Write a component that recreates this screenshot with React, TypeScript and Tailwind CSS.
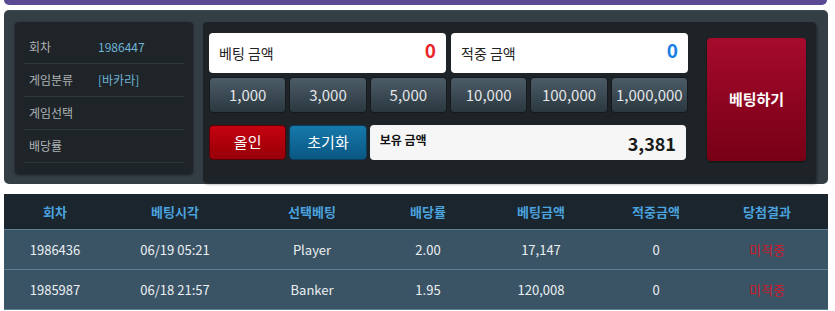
import React from "react";

const font = { fontFamily: '"Noto Sans CJK KR", "Noto Sans", sans-serif' };

const chips = ["1,000", "3,000", "5,000", "10,000", "100,000", "1,000,000"];

const infoRows = [
  { label: "회차", value: "1986447" },
  { label: "게임분류", value: "[바카라]" },
  { label: "게임선택", value: "" },
  { label: "배당률", value: "" },
];

const rows = [
  ["1986436", "06/19 05:21", "Player", "2.00", "17,147", "0", "미적중"],
  ["1985987", "06/18 21:57", "Banker", "1.95", "120,008", "0", "미적중"],
];

const headers = ["회차", "베팅시각", "선택베팅", "배당률", "베팅금액", "적중금액", "당첨결과"];

export default function App() {
  return (
    <div className="w-[835px] h-[311px] bg-white overflow-hidden" style={font}>
      <div className="mx-[4px] w-[823px] h-[5px] bg-[#5b4a93] rounded-b-[5px]" />
      <div className="mt-[5px] mx-[4px] w-[824px] h-[174px] bg-[#343e45] rounded-[5px] flex items-start pt-[11px] pl-[11px] gap-[10px] border-t border-[#3d484f]">
        <div className="w-[178px] h-[152px] bg-[#1e2427] rounded-[4px] shadow-[0_1px_3px_rgba(0,0,0,0.5)] pt-[9px] px-[9px]">
          {infoRows.map((r) => (
            <div key={r.label} className="h-[33px] flex items-center border-b border-[#30373b] pl-[5px] text-[12px]">
              <span className="w-[69px] text-[#aeb3b6]">{r.label}</span>
              <span className="text-[#6fb4d8]">{r.value}</span>
            </div>
          ))}
        </div>
        <div className="w-[613px] h-[160px] bg-[#1d2326] rounded-[4px] shadow-[1px_2px_3px_rgba(0,0,0,0.45)] pt-[11px] pl-[6px] flex">
          <div className="w-[479px] flex flex-col">
            <div className="grid grid-cols-2 gap-[5px] h-[40px]">
              <div className="bg-white rounded-[4px] flex items-center justify-between pl-[10px] pr-[10px]">
                <span className="text-[14px] text-[#222]">베팅 금액</span>
                <span className="text-[19px] font-bold text-[#e8262b] -mt-[6px]">0</span>
              </div>
              <div className="bg-white rounded-[4px] flex items-center justify-between pl-[10px] pr-[10px]">
                <span className="text-[14px] text-[#222]">적중 금액</span>
                <span className="text-[19px] font-bold text-[#1b7fe3] -mt-[6px]">0</span>
              </div>
            </div>
            <div className="grid grid-cols-6 gap-[3px] h-[36px] mt-[4px]">
              {chips.map((c) => (
                <div
                  key={c}
                  className="rounded-[4px] border border-[#141a1d] bg-gradient-to-b from-[#4c5c67] to-[#2b3840] flex items-center justify-center text-[15px] text-[#e4e6e8]"
                >
                  {c}
                </div>
              ))}
            </div>
            <div className="grid grid-cols-6 gap-[3px] h-[35px] mt-[12px]">
              <div className="rounded-[4px] border border-[#5a0008] bg-gradient-to-b from-[#c5020f] to-[#970008] flex items-center justify-center text-[15px] text-white">
                올인
              </div>
              <div className="rounded-[4px] border border-[#0a3d5c] bg-gradient-to-b from-[#1679ab] to-[#0a5783] flex items-center justify-center text-[15px] text-white">
                초기화
              </div>
              <div className="col-span-4 mr-[2px] rounded-[4px] bg-[#f6f6f6] flex items-center justify-between pl-[10px] pr-[10px]">
                <span className="text-[12px] font-bold text-[#111] -mt-[6px]">보유 금액</span>
                <span className="text-[18px] font-semibold text-[#1a1a1a] mt-[2px]">3,381</span>
              </div>
            </div>
          </div>
          <div className="ml-[19px] mt-[5px] w-[99px] h-[123px] rounded-[4px] bg-gradient-to-b from-[#a60b2d] to-[#770016] shadow-[0_1px_2px_rgba(0,0,0,0.5)] flex items-center justify-center text-[15px] font-bold text-white">
            베팅하기
          </div>
        </div>
      </div>
      <div className="mt-[10px] mx-[4px] w-[824px] text-[13px]">
        <div className="grid grid-cols-[102px_138px_136px_96px_130px_100px_122px] h-[36px] bg-[#1b252e] border-b border-[#5d7d90]">
          {headers.map((h) => (
            <div key={h} className="flex items-center justify-center font-bold text-[#4aa2de]">
              {h}
            </div>
          ))}
        </div>
        {rows.map((r) => (
          <div
            key={r[0]}
            className="grid grid-cols-[102px_138px_136px_96px_130px_100px_122px] h-[40px] bg-[#3a5466] border-b border-[#5d7d90]"
          >
            {r.map((c, i) => (
              <div
                key={i}
                className={
                  i === 6
                    ? "flex items-center justify-center text-[#d0182b]"
                    : "flex items-center justify-center text-[#eceff1]"
                }
              >
                {c}
              </div>
            ))}
          </div>
        ))}
      </div>
    </div>
  );
}
